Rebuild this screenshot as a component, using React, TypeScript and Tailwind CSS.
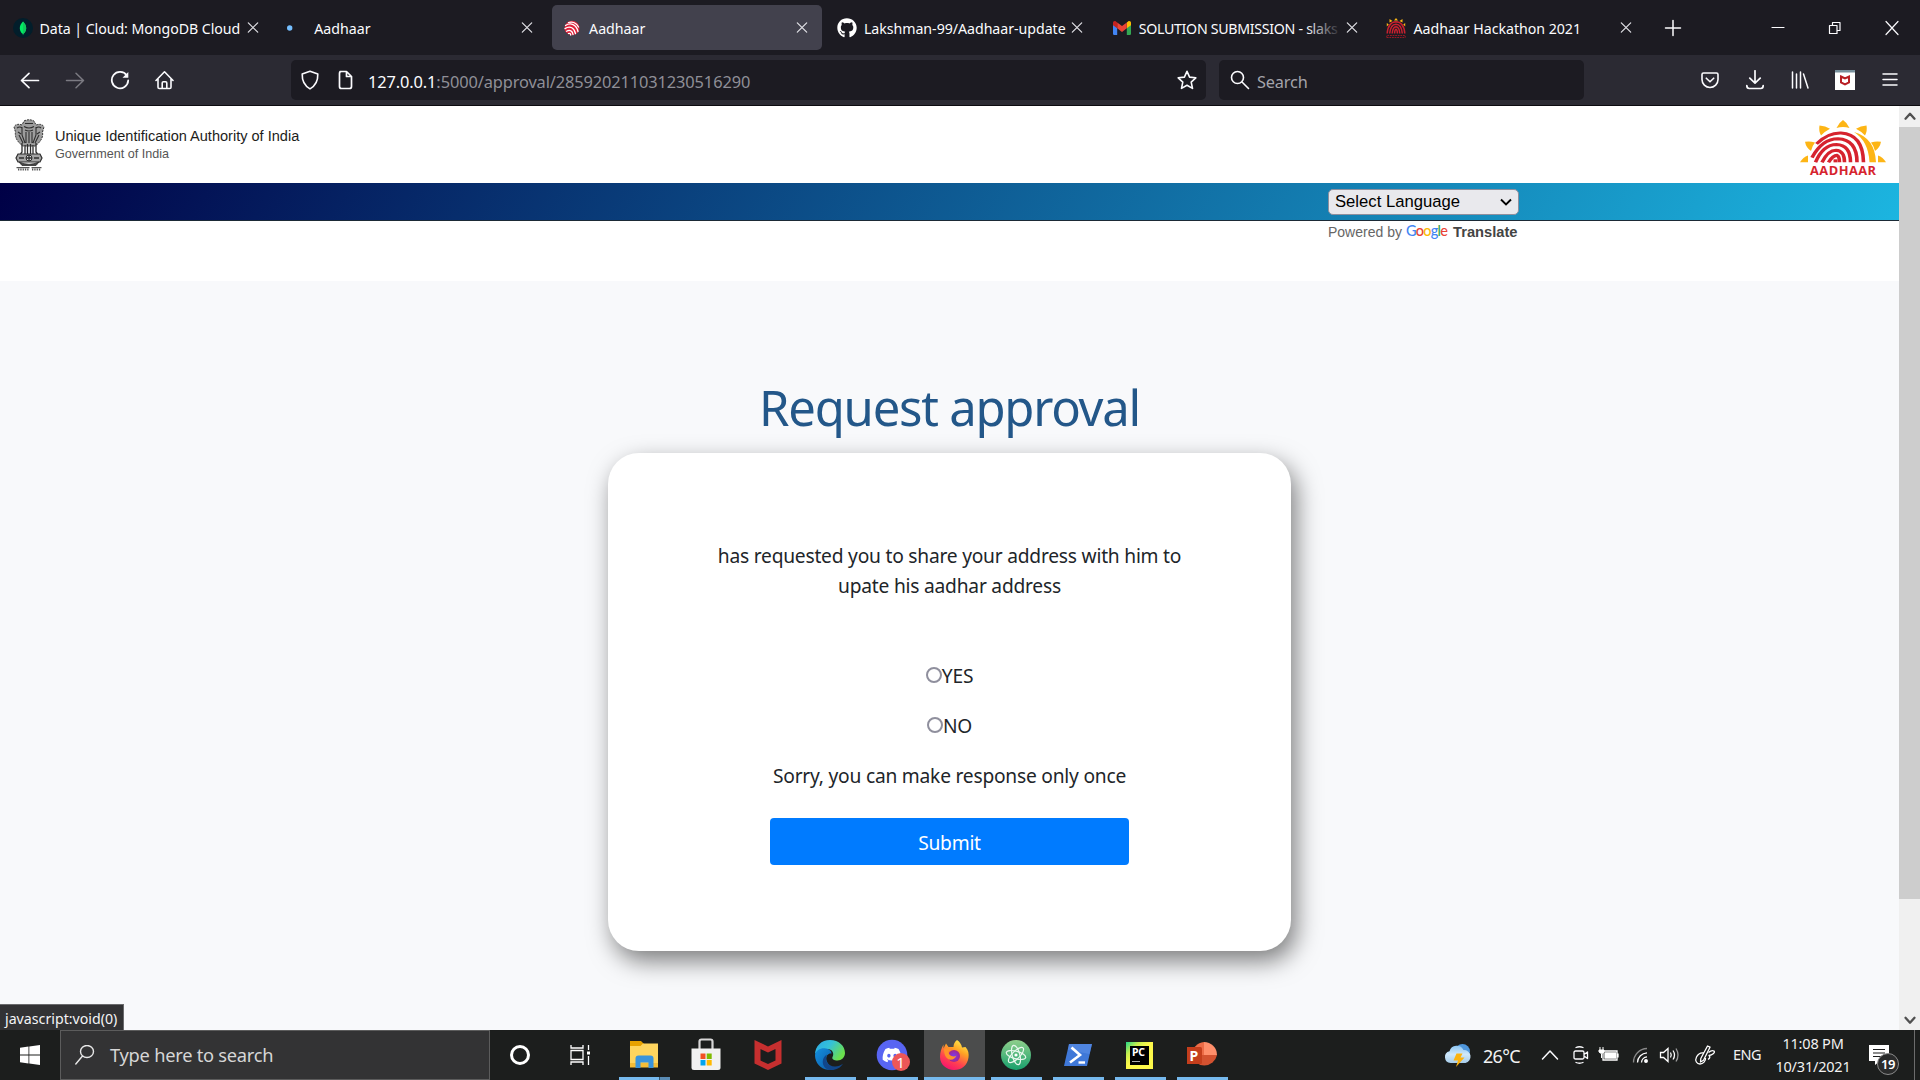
import React from "react";
import { FaGithub, FaDiscord } from "react-icons/fa";

type Kids = { children?: React.ReactNode };

const UI = "font-['Noto_Sans','Open_Sans',sans-serif]";
const ARIAL = "font-['Liberation_Sans',Arial,sans-serif]";

/* ---------- browser chrome icons ---------- */

function Line({ d, className = "h-5 w-5", sw = 1.6, color = "#fbfbfe" }: { d: string; className?: string; sw?: number; color?: string }) {
  return (
    <svg viewBox="0 0 20 20" className={className + " shrink-0"} fill="none" stroke={color} strokeWidth={sw} strokeLinecap="round" strokeLinejoin="round">
      <path d={d} />
    </svg>
  );
}

function MongoIcon() {
  return (
    <svg viewBox="0 0 20 20" className="h-5 w-5">
      <circle cx="10" cy="10" r="10" fill="#021e2b" />
      <path d="M10 3.500c2.200 2.300 3.200 4.300 3.200 6.700 0 2.600-1.300 4.500-2.900 5.600L10 17.500l-.3-1.700C8.100 14.700 6.800 12.800 6.800 10.200 6.800 7.800 7.800 5.800 10 3.500z" fill="#00ed64" />
      <path d="M10 3.500c2.200 2.300 3.200 4.300 3.200 6.700 0 2.600-1.300 4.500-2.900 5.600L10 17.500z" fill="#10c85c" />
    </svg>
  );
}

function DotIcon() {
  return (
    <svg viewBox="0 0 20 20" className="h-5 w-5">
      <circle cx="2.700" cy="10" r="2.700" fill="#75bfff" />
    </svg>
  );
}

function FingerIcon() {
  return (
    <svg viewBox="0 0 20 20" className="h-5 w-5" fill="none" strokeLinecap="round">
      <ellipse cx="10" cy="10" rx="7.600" ry="7.200" fill="#e0223a" />
      <g stroke="#fff" strokeWidth="1.300">
        <path d="M3.500 7.500c5-3.500 11-1 12.500 6" />
        <path d="M3 10.600c5-3.200 9.500-.7 10.500 5" />
        <path d="M4.500 13.300c3.500-2 6-.3 6.500 3.200" />
        <path d="M6.500 4.500c4-1.300 8 .5 10 4.500" />
        <path d="M6.500 15.500c1.300-.5 2 0 2.200 1.500" />
      </g>
    </svg>
  );
}

function GmailIcon() {
  return (
    <svg viewBox="0 0 20 20" className="h-5 w-5">
      <path d="M1 6.500l4.200 3.100V17H2.200A1.200 1.200 0 0 1 1 15.800z" fill="#4285f4" />
      <path d="M19 6.500l-4.200 3.100V17h3a1.200 1.200 0 0 0 1.200-1.200z" fill="#34a853" />
      <path d="M14.800 4.500L16.100 3.500C17.400 2.600 19 3.400 19 5v2.200l-4.200 3.100z" fill="#fbbc04" />
      <path d="M5.200 4.500L10 8.100l4.800-3.600v5.800L10 13.900l-4.800-3.600z" fill="#ea4335" />
      <path d="M1 5c0-1.600 1.600-2.400 2.900-1.500l1.300 1v5.800L1 7.200z" fill="#c5221f" />
    </svg>
  );
}

function HackIcon() {
  return (
    <svg viewBox="0 0 20 20" className="h-5 w-5" fill="none">
      <path d="M8 2.500l2-2.500 2 2.500zM3.500 4.500L3.500 1l3 2zM16.500 4.500L16.500 1l-3 2zM.8 8.500l0-3.500 2 1.500zM19.200 8.500l0-3.500-2 1.500z" fill="#fbb615" />
      <g stroke="#c8202f" strokeWidth="1.500">
        <path d="M1.200 15.500Q2 4 10 3.700Q18 4 18.800 15.500" />
        <path d="M3.700 15.500Q4.500 6.500 10 6.300Q15.500 6.500 16.300 15.500" />
        <path d="M6.200 15.500Q6.700 9 10 8.800Q13.300 9 13.800 15.500" />
        <path d="M8.600 15.500Q8.700 11.500 10 11.300Q11.300 11.500 11.400 15.500" />
      </g>
      <path d="M.8 19.500V17.500h18.400v2z" stroke="#a31a26" strokeWidth=".9" strokeDasharray="1.800 .8" />
    </svg>
  );
}

type TabProps = { icon: React.ReactNode; title: string; active?: boolean; track: string; fade?: boolean };

function Tab({ icon, title, active, track, fade }: TabProps) {
  return (
    <div className={"flex h-[45px] w-[270px] shrink-0 items-center rounded-[5px] pl-[10px] " + (active ? "bg-[#42414d]" : "")}>
      <div className="h-5 w-5 shrink-0">{icon}</div>
      <div className={"relative ml-[7px] w-[203px] pt-px " + (fade ? "overflow-hidden" : "")}>
        <span className={"whitespace-nowrap text-[14.200px] leading-5 text-[#fbfbfe] " + track}>{title}</span>
        {fade && <div className="absolute inset-y-0 right-0 w-9 bg-linear-to-r from-transparent to-[#1c1b22]" />}
      </div>
      <Line d="M5.300 4.800L14.700 14.200M14.700 4.800L5.300 14.200" sw={1.200} color="#e3e3e8" />
    </div>
  );
}

function TabBar() {
  return (
    <div className="flex h-[55px] items-center bg-[#1c1b22] pl-[2.500px]">
      <div className="flex gap-[4.800px]">
        <Tab icon={<MongoIcon />} title="Data | Cloud: MongoDB Cloud" track="tracking-[-0.060px]" />
        <Tab icon={<DotIcon />} title="Aadhaar" track="tracking-normal" />
        <Tab icon={<FingerIcon />} title="Aadhaar" active track="tracking-normal" />
        <Tab icon={<FaGithub className="h-5 w-5 text-white" />} title="Lakshman-99/Aadhaar-update" track="tracking-[-0.040px]" />
        <Tab icon={<GmailIcon />} title="SOLUTION SUBMISSION - slaks" track="tracking-[-0.300px]" fade />
        <Tab icon={<HackIcon />} title="Aadhaar Hackathon 2021" track="tracking-[-0.030px]" />
      </div>
      <div className="ml-[9px] flex w-[36px] justify-center">
        <Line d="M10 2.500v15M2.500 10h15" sw={1.500} />
      </div>
      <div className="ml-auto flex">
        {["M4 9.500h12", "M4.500 7.500h7.500v8H4.500zM7.500 7.500V4.500h7.500v8h-3", "M4 3.500l12 13M16 3.500L4 16.500"].map((d) => (
          <div key={d} className="flex w-[57px] justify-center">
            <Line d={d} sw={1.200} />
          </div>
        ))}
      </div>
    </div>
  );
}

function NavCell({ children, w = "w-[45px]" }: Kids & { w?: string }) {
  return <div className={"flex shrink-0 justify-center " + w}>{children}</div>;
}

function NavBar() {
  return (
    <div className="flex h-[51px] items-center border-b border-[#0c0b10] bg-[#2b2a33]">
      <div className="flex w-[291px] pl-[7px]">
        <NavCell><Line d="M1.500 10.500h17M9 3.300L1.500 10.500L9 17.700" sw={1.700} /></NavCell>
        <NavCell><Line d="M1.500 10.500h17M11 3.300L18.500 10.500L11 17.700" color="#7b7a82" sw={1.500} /></NavCell>
        <NavCell>
          <svg viewBox="0 0 20 20" className="h-5 w-5" fill="none" stroke="#fbfbfe" strokeWidth="1.800" strokeLinecap="round">
            <path d="M16.800 5.500A8.200 8.200 0 1 0 18.200 10.500" />
            <path d="M18.300 2v5.800h-5.800z" fill="#fbfbfe" stroke="none" />
          </svg>
        </NavCell>
        <NavCell><Line d="M1 10.500L9.500 1.800l8.500 8.700M3 9v8.200q0 1.300 1.300 1.300h10.400q1.300 0 1.300-1.300V9M7.200 18.300V13q0-1.200 1.200-1.200h2.200q1.200 0 1.200 1.200v5.300" sw={1.600} /></NavCell>
      </div>
      <div className="flex h-10 w-[915px] items-center rounded-[5px] bg-[#1c1b22] pl-[9px]">
        <Line d="M10 1.200l7.800 2.900c.2 6.500-1.600 11.400-7.800 14.800C3.800 15.500 2 10.600 2.200 4.100z" sw={1.600} />
        <Line d="M5 1.500h6.500l5 5V16.500q0 2-2 2h-8q-2 0-2-2V3.500q0-2 2-2M11.500 2v4.500h4.500" sw={1.700} className="ml-[15px] h-5 w-5" />
        <span className="ml-[13px] whitespace-nowrap pt-[4px] text-[16.400px] leading-6 tracking-[-0.120px] text-[#8f8f97]">
          <span className="text-[#fbfbfe]">127.0.0.1</span>:5000/approval/285920211031230516290
        </span>
        <Line d="M10 1.300l2.600 5.800 6.200.7-4.600 4.300 1.300 6.300L10 15.200l-5.500 3.200 1.300-6.300L1.200 7.800l6.200-.7z" className="mr-[9px] ml-auto h-5 w-5" />
      </div>
      <div className="ml-[13px] flex h-10 w-[365px] items-center rounded-[5px] bg-[#1c1b22] pl-[11px]">
        <Line d="M13.500 7.500a6 6 0 1 1-12 0a6 6 0 1 1 12 0M12 12l6.500 6.500" />
        <span className="ml-[7px] pt-[4px] text-[16.300px] leading-6 tracking-[-0.150px] text-[#a4a4ab]">Search</span>
      </div>
      <div className="ml-auto flex pr-[8px]">
        <NavCell><Line d="M3.500 3h13q1.500 0 1.500 1.500V9.500a8 8 0 0 1-16 0V4.500Q2 3 3.500 3zM6.300 8.200L10 11.800l3.700-3.600" /></NavCell>
        <NavCell><Line d="M10 .8V13M4.800 8.200L10 13.200l5.200-5M1.800 15.500q0 3 2.500 3h11.400q2.500 0 2.500-3" sw={1.700} /></NavCell>
        <NavCell><Line d="M2.500 2v16M6.500 4v14M10.500 2v16M13.500 4l4.500 14" sw={1.500} /></NavCell>
        <NavCell>
          <svg viewBox="0 0 20 20" className="h-5 w-5">
            <path d="M0 0h20v20H0z" fill="#fff" />
            <path d="M0 0h20v2.500H0z" fill="#78909c" />
            <path d="M6 6.500L10 8.500l4-2v6L10 14.500l-4-2z" fill="none" stroke="#b81f24" strokeWidth="2" />
          </svg>
        </NavCell>
        <NavCell><Line d="M3 4h14M3 9.500h14M3 15h14" sw={1.500} /></NavCell>
      </div>
    </div>
  );
}

/* ---------- page ---------- */

function Emblem() {
  return (
    <svg viewBox="0 0 32 52" className="h-[52px] w-8" fill="none" stroke="#2e2e2e">
      <path d="M11 2q5-2.500 10 0l2 4q6-2 8 2l-1.500 5q1 6-4 11l-3 3H9.500l-3-3q-5-5-4-11L1 8q2-4 8-2z" fill="#9d9d9d" strokeWidth="1" strokeDasharray="2 1" />
      <path d="M12 4.500h8M11 7.500q5 3 10 0M12 11q4 2 8 0M4 9q3-2 5 0M23 9q3-2 5 0M5 13l3 2M27 13l-3 2M9 8v8l3 8M23 8v8l-3 8M13 13v11M16 13v11M19 13v11M6 16l4 8M26 16l-4 8" strokeWidth="1.100" />
      <path d="M9 24v9l-1.500 2M12 26v9M14.500 25v10M17.500 25v10M20 26v9M23 24v9l1.500 2" strokeWidth="1.300" />
      <path d="M5 35h22l2 4-2 4H5L3 39z" fill="#a5a5a5" strokeWidth="1.200" />
      <circle cx="16" cy="39" r="3" strokeWidth="1" fill="#ddd" />
      <path d="M6 39h5M21 39h5M13 39h6M16 36v6" strokeWidth="1.300" />
      <path d="M6 43q10 4.500 20 0l-3 3.500H9z" fill="#444" strokeWidth=".8" />
      <path d="M3.500 48.700h13M18.500 48.700h10" strokeWidth="1" />
      <path d="M5 50.500h11M19 50.500h9" strokeWidth="1.800" strokeDasharray="1.300 1" stroke="#555" />
    </svg>
  );
}

function AadhaarLogo() {
  return (
    <svg viewBox="0 0 90 50" className="h-[50px] w-[90px]" fill="none">
      <g transform="translate(0 2.400) scale(1 0.840)">
        <g fill="#fdb515">
          <path d="M43 3q4.500 3.500 6.500 9.500q-6.500-2-13 0q2-6 6.500-9.500z" />
          <path d="M19.500 9.500q6 .5 10.500 4q-5 3-9 8q-2.500-5.500-1.500-12z" />
          <path d="M66.500 9.500q-6 .5-10.500 4q5 3 9 8q2.500-5.500 1.500-12z" />
          <path d="M5 29q5-1 10 .8q-3 4.200-4 10.200q-5-4-6-11z" />
          <path d="M81 29q-5-1-10 .8q3 4.200 4 10.200q5-4 6-11z" />
          <path d="M0 53.500q3-6 8-8v8z" />
          <path d="M86 53.500q-3-6-8-8v8z" />
          <path d="M54 17.500q21 7 22 36h-6.500q-1-25-15.500-36z" />
        </g>
        <g stroke="#d6232e" strokeWidth="3.600">
          <path d="M16.500 31.500Q28 18 41 18.500Q63 20 63.500 53.500" />
          <path d="M12 48Q22 25.500 38 25.500Q57 26.500 57 53.500" />
          <path d="M15.500 53.500Q23 32.500 36.500 32.300Q50.500 33 50.500 53.500" />
          <path d="M22 53.500Q28 39 36 39Q44.500 39.500 44.500 53.500" />
          <path d="M28.500 53.500Q33 45 37 45.200Q39.500 46.500 39.500 53.500" />
          <path d="M33.500 51.700h4" />
        </g>
      </g>
    </svg>
  );
}

function PageHeader() {
  return (
    <div className="relative flex h-[77px] items-start justify-between bg-white">
      <div className="flex pt-[13px] pl-[13px]">
        <Emblem />
        <div className={"ml-[10px] flex flex-col pt-[7px] " + ARIAL}>
          <span className="text-[14.560px] leading-[20px] whitespace-nowrap text-[#1d1d1b]">Unique Identification Authority of India</span>
          <span className="text-[12.600px] leading-[16px] whitespace-nowrap text-[#555]">Government of India</span>
        </div>
      </div>
      <div className="flex w-[99px] flex-col pt-[9px]">
        <AadhaarLogo />
        <span className="-mt-[2px] ml-[10px] text-[12.800px] leading-[14px] font-bold tracking-[0.500px] text-[#d6232e] font-['Open_Sans',sans-serif]">AADHAAR</span>
      </div>
    </div>
  );
}

function LanguageBar() {
  return (
    <div className={"h-[98px] bg-white " + ARIAL}>
      <div className="flex h-[38px] border-b border-[#1b2a36] bg-[linear-gradient(120deg,#000046,#1cb5e0)] pt-[6px] pl-[1328px]">
        <div className="flex h-[26px] w-[191px] items-center justify-between rounded-[5px] border border-[#8f8f9d] bg-[#e9e9ed] pr-[5px] pl-[6px]">
          <span className="-mt-px text-[16.670px] leading-[23px] text-black">Select Language</span>
          <svg viewBox="0 0 14 14" className="h-[14px] w-[14px]" fill="none" stroke="#000" strokeWidth="1.900">
            <path d="M2 4.500l5 5 5-5" />
          </svg>
        </div>
      </div>
      <div className="flex pl-[1328px] whitespace-nowrap">
        <span className="w-[78px] text-[14px] leading-[22px] text-[#666]">Powered by</span>
        <span className="w-[47px] text-[14.500px] leading-[20px] font-medium tracking-[-0.750px] font-['Lato',sans-serif]">
          <span className="text-[#4285f4]">G</span>
          <span className="text-[#ea4335]">o</span>
          <span className="text-[#fbbc05]">o</span>
          <span className="text-[#4285f4]">g</span>
          <span className="text-[#34a853]">l</span>
          <span className="text-[#ea4335]">e</span>
        </span>
        <span className="text-[14.700px] leading-[22px] font-bold text-[#444]">Translate</span>
      </div>
    </div>
  );
}

function Choice({ label }: { label: string }) {
  return (
    <label className="mb-5 flex h-[30px] items-center justify-center">
      <span className="h-4 w-4 rounded-full border-2 border-[#8f8f9d] bg-white" />
      <span className="pt-px">{label}</span>
    </label>
  );
}

function ApprovalCard() {
  return (
    <div className="mx-auto h-[498px] w-[683px] rounded-[31px] bg-white pt-[87px] text-center text-[19.200px] leading-[30px] tracking-[-0.220px] text-[#212529] shadow-[5px_10px_25px_rgba(0,0,0,0.5)]">
      <p className="mb-[59px] pt-px">
        has requested you to share your address with him to
        <br />
        upate his aadhar address
      </p>
      <Choice label="YES" />
      <Choice label="NO" />
      <p className="pt-px">Sorry, you can make response only once</p>
      <button className="mt-[27px] h-[47px] w-[359px] rounded-[4px] bg-[#007bff] pt-[3px] text-white">Submit</button>
    </div>
  );
}

function ScrollBar() {
  return (
    <div className="flex w-[21px] flex-col bg-[#f0f0f0]">
      <div className="flex h-[21px] items-start justify-center pt-px">
        <Line d="M5 13l5-5.500 5 5.500" sw={2.600} color="#505050" className="h-[18px] w-[18px]" />
      </div>
      <div className="h-[772px] bg-[#cdcdcd]" />
      <div className="mt-auto flex h-[21px] items-center justify-center">
        <Line d="M5 7.500l5 5.500 5-5.500" sw={2.600} color="#505050" className="h-[18px] w-[18px]" />
      </div>
    </div>
  );
}

function Page() {
  return (
    <div className="relative flex h-[924px]">
      <div className="w-[1899px] overflow-hidden bg-[#f8f9fb]">
        <PageHeader />
        <LanguageBar />
        <h1 className="pt-[96px] text-center text-[49px] leading-[60px] tracking-[-1.250px] text-[#235789]">Request approval</h1>
        <div className="pt-[16px]">
          <ApprovalCard />
        </div>
      </div>
      <ScrollBar />
      <div className="absolute bottom-0 left-0 h-[26px] w-[124px] border-t border-r border-[#6a6a6c] bg-[#323234] pt-[3px] pl-[5px] text-[14.200px] leading-[22px] whitespace-nowrap text-[#f4f4f6]">
        javascript:void(0)
      </div>
    </div>
  );
}

/* ---------- taskbar ---------- */

function App36({ children }: Kids) {
  return (
    <svg viewBox="0 0 36 36" className="h-9 w-9" fill="none">
      {children}
    </svg>
  );
}

const explorer = (
  <App36>
    <path d="M4 4h11l3 3v6H4z" fill="#e8a200" />
    <path d="M4 9h10.500l2.500-2.500H32v22H4z" fill="#ffd55e" />
    <path d="M4 26h28v4.500H4z" fill="#f5bd37" />
    <path d="M9.500 31V21.500q0-3 3-3h12q3 0 3 3V31h-5v-5.500h-8V31z" fill="#3a94dc" />
  </App36>
);

const store = (
  <App36>
    <path d="M11.500 12V4.500q0-2 2-2h9q2 0 2 2v8" stroke="#d7d7d7" strokeWidth="2.200" />
    <path d="M3.500 11.500h29v19q0 2.500-2.500 2.500H6q-2.500 0-2.500-2.500z" fill="#f1f1f1" />
    <path d="M12.500 16.500h5v5.500h-5z" fill="#f25022" />
    <path d="M18.700 16.500h5v5.500h-5z" fill="#7fba00" />
    <path d="M12.500 23h5v5.500h-5z" fill="#00a4ef" />
    <path d="M18.700 23h5v5.500h-5z" fill="#ffb900" />
  </App36>
);

const mcafee = (
  <App36>
    <path d="M4.500 3L18 9.500 31.500 3v23.500L18 33 4.500 26.500z" fill="#c62f2f" />
    <path d="M10.500 12L18 15.500l7.500-3.500v11.500L18 27 10.500 23.500z" fill="#1c1d1d" />
  </App36>
);

const edge = (
  <App36>
    <defs>
      <linearGradient id="edgeTop" x1="0" y1="0" x2="1" y2=".5">
        <stop offset="0" stopColor="#2aa9e8" />
        <stop offset=".5" stopColor="#35c1d8" />
        <stop offset="1" stopColor="#6be04d" />
      </linearGradient>
      <linearGradient id="edgeLow" x1="0" y1="0" x2="1" y2="1">
        <stop offset="0" stopColor="#1490df" />
        <stop offset="1" stopColor="#0c59a4" />
      </linearGradient>
    </defs>
    <path d="M3 18C3 9 9.500 3 18 3c9 0 15 6 15 13 0 4.500-3.500 7.500-7.500 7.500-3.500 0-6-1.500-5-3.500 2-3.500 0-8-5.500-8C9 12 4 14 3 18z" fill="url(#edgeTop)" />
    <path d="M3 18c1-5 6-7.500 11-6.500 4 .8 5.500 3 5.500 5-6-1-8.500 9 2 14.500-2.500 1.500-4.500 2-6 1.800C8.500 32 3 26 3 18z" fill="url(#edgeLow)" />
    <path d="M15 17.500c-3 5 .5 12 8 12 3 0 6-1.300 8-2.700C28.500 31 23.500 33.500 18.500 33c-9-1-10-12-3.500-15.500z" fill="#11468a" />
  </App36>
);

const discord = (
  <div className="relative h-9 w-9">
    <div className="flex h-9 w-9 scale-[0.850] items-center justify-center rounded-full bg-[#5865f2]">
      <FaDiscord className="h-6 w-6 text-white" />
    </div>
    <span className="absolute right-0 bottom-0.5 flex h-[18px] w-[18px] items-center justify-center rounded-full bg-[#ed5757] text-[15px] leading-none text-white">1</span>
  </div>
);

const firefox = (
  <App36>
    <defs>
      <linearGradient id="ffBody" x1=".8" y1="0" x2=".3" y2="1">
        <stop offset="0" stopColor="#fff44f" />
        <stop offset=".35" stopColor="#ffa324" />
        <stop offset=".7" stopColor="#ff4150" />
        <stop offset="1" stopColor="#f5126f" />
      </linearGradient>
      <radialGradient id="ffCore">
        <stop offset="0" stopColor="#7a3cf0" />
        <stop offset="1" stopColor="#a3278f" />
      </radialGradient>
    </defs>
    <path d="M21 3c3 2 4.500 4.500 5 7.500l3.500-.5c3 3.500 3.500 6.500 3 10.500C31.500 28.500 25.500 33 18 33S4 27.500 4 20c0-5 1.500-9 3.500-12.500v4l2.500-5 2.500 3.500H17.500c0-3 1-5 3.500-7z" fill="url(#ffBody)" />
    <circle cx="18" cy="19" r="6" fill="url(#ffCore)" />
    <path d="M8 12q4-2.500 9-1-1 2.500-4.500 3.500 0 3 3 4.500 3 1 5-.5-2 5-7.500 4-5-2-5-10.500z" fill="#ff9328" />
  </App36>
);

const atom = (
  <App36>
    <defs>
      <linearGradient id="atomBg" x1="0" y1="0" x2="0" y2="1">
        <stop offset="0" stopColor="#8fcf8c" />
        <stop offset="1" stopColor="#17a06c" />
      </linearGradient>
    </defs>
    <circle cx="18" cy="18" r="15" fill="url(#atomBg)" />
    <g stroke="#e9f7ee" strokeWidth="1.200">
      <ellipse cx="18" cy="18" rx="10" ry="3.800" transform="rotate(15 18 18)" />
      <ellipse cx="18" cy="18" rx="10" ry="3.800" transform="rotate(75 18 18)" />
      <ellipse cx="18" cy="18" rx="10" ry="3.800" transform="rotate(-45 18 18)" />
    </g>
    <circle cx="18" cy="18" r="1.600" fill="#fff" />
  </App36>
);

const powershell = (
  <App36>
    <path d="M9 7h23l-5 22H4z" fill="#3f78d8" />
    <path d="M9 7h23l-2.500 10L8 13z" fill="#5a8de6" opacity=".6" />
    <path d="M11.500 10.500l8.500 7.500-10 7.500" stroke="#fff" strokeWidth="2.600" />
    <path d="M18.500 25.500h6.500" stroke="#fff" strokeWidth="2.400" />
  </App36>
);

const pycharm = (
  <div className="flex h-[27px] w-[27px] items-center justify-center bg-[linear-gradient(135deg,#21d789_0%,#c8ef4e_25%,#fcf84a_45%)]">
    <div className="flex h-[19px] w-[19px] flex-col bg-black pt-px pl-[2px]">
      <span className="text-[10.500px] leading-[11px] font-bold tracking-[-0.300px] text-white">PC</span>
      <span className="mt-[3px] h-[1.500px] w-[8px] bg-[#aaa]" />
    </div>
  </div>
);

const powerpoint = (
  <div className="relative h-9 w-9">
    <App36>
      <path d="M20 18V5a13 13 0 0 0-12 13z" fill="#ed6c47" />
      <path d="M20 5a13 13 0 0 1 13 13H20z" fill="#ff8f6b" />
      <path d="M7.500 18H33a13 13 0 0 1-25.500 0z" fill="#d35230" />
      <path d="M3 10h13.500q1.500 0 1.500 1.500v14q0 1.500-1.500 1.500H3z" fill="#c43e1c" />
    </App36>
    <span className="absolute top-[9px] left-[6px] text-[14px] leading-[19px] font-bold text-white">P</span>
  </div>
);

function TaskIcon({ children, open, active, stacked }: Kids & { open?: boolean; active?: boolean; stacked?: boolean }) {
  return (
    <div className={"flex h-[50px] w-[61px] flex-col items-center " + (active ? "bg-[#4b4c4c]" : "")}>
      <div className="flex h-[47px] items-center pt-[3px] pr-[2px]">{children}</div>
      {open && (
        <div className={"flex h-[3px] bg-[#76b9ed] " + (active ? "w-full" : "w-[51px]")}>
          {stacked && <div className="ml-auto h-full w-[11px] border-l border-[#35566e] bg-[#5a8cb4]" />}
        </div>
      )}
    </div>
  );
}

function Tray() {
  return (
    <div className="ml-auto flex h-full items-center text-[#f2f2f2]">
      <svg viewBox="0 0 30 26" className="h-[26px] w-[30px]">
        <defs>
          <linearGradient id="cloud" x1="0" y1="0" x2="0" y2="1">
            <stop offset="0" stopColor="#8cc6f2" />
            <stop offset=".5" stopColor="#cfe8fb" />
            <stop offset="1" stopColor="#a7cdea" />
          </linearGradient>
        </defs>
        <circle cx="19.500" cy="9.500" r="7.500" fill="#4f97dc" />
        <path d="M7.500 21a6 6 0 0 1-1-11.800A7.500 7.500 0 0 1 20.500 8a6.600 6.600 0 0 1 2 13z" fill="url(#cloud)" />
        <path d="M13.500 11.500h6l-2 4h4L13 25l2-6.500h-4.500z" fill="#fbb310" />
      </svg>
      <span className="ml-[10px] w-[38px] pt-px text-[18px] leading-6 tracking-[-0.700px] whitespace-nowrap">26°C</span>
      <Line d="M2.500 14L10 6l7.500 8" sw={1.500} className="ml-[19px] h-5 w-5" />
      <Line d="M3.500 6h7q1.500 0 1.500 1.500v5q0 1.500-1.500 1.500h-7Q2 14 2 12.500v-5Q2 6 3.500 6zM12 9.500l3.500-2.500v6.500L12 11M4 2.500q3.500-1.500 7 0M4 17.500q3.500 1.500 7 0" sw={1.300} className="ml-[12px] h-5 w-5" />
      <svg viewBox="0 0 22 20" className="ml-[6px] h-5 w-[22px]" fill="none" stroke="#fff" strokeWidth="1.300">
        <path d="M5 6h14v9H5zM20 8.500v4" />
        <path d="M7 8h10.500v5H7z" fill="#fff" />
        <path d="M2 2v3M5 2v3M1 5h5v2q-2.500 3-5 0zM3.500 9v4" fill="#fff" strokeWidth="1" />
      </svg>
      <svg viewBox="0 0 20 20" className="ml-[11px] h-5 w-5" fill="none" stroke="#fff" strokeWidth="1.300">
        <circle cx="15" cy="16" r="1.300" fill="#fff" />
        <path d="M10.500 17.500A6 6 0 0 1 16 11.800" />
        <path d="M6.500 17.500A10 10 0 0 1 16 7.800" />
        <path d="M2.500 17.500A14 14 0 0 1 16 3.500" stroke="#888" />
      </svg>
      <svg viewBox="0 0 22 20" className="ml-[8px] h-5 w-[22px]" fill="none" stroke="#fff" strokeWidth="1.300">
        <path d="M1.500 7.500h3L9 3.500v13l-4.500-4h-3z" />
        <path d="M11.500 7.500q1.500 2.500 0 5M14 5.500q3 4.500 0 9" />
        <path d="M17 3.500q4 6.500 0 13" stroke="#999" />
      </svg>
      <svg viewBox="0 0 22 22" className="ml-[13px] h-[22px] w-[22px]" fill="none" stroke="#fff" strokeWidth="1.300" strokeLinejoin="round">
        <path d="M13.500 2l2.500 1.200-6.500 13L6.500 18l.3-3.500z" />
        <path d="M10 9q-5-1-7.500 4c-2 4 .5 7 3.500 7s6-3 5.500-6M14.500 8.500q3-2.500 5.500-1.500c1.500 2-2 4-5 4.500q2 2-1 4" />
      </svg>
      <span className="ml-[17px] w-[31px] text-[14.500px] tracking-[-0.500px]">ENG</span>
      <div className="ml-[10px] flex w-[78px] flex-col items-center text-[14.500px] leading-[23px] tracking-[-0.200px] whitespace-nowrap">
        <span>11:08 PM</span>
        <span>10/31/2021</span>
      </div>
      <div className="relative ml-[17px] h-5 w-5">
        <svg viewBox="0 0 20 20" className="h-5 w-5">
          <path d="M0 0h20v16h-9l-5 4v-4H0z" fill="#fff" />
          <path d="M4 4.500h12M4 8h12M4 11.500h8" stroke="#1c1d1d" strokeWidth="1.200" />
        </svg>
        <span className="absolute top-[8px] left-[8px] flex h-[22px] w-[22px] items-center justify-center rounded-full border border-[#8a8a8a] bg-[#2a2b2b] text-[13px] leading-none font-semibold tracking-[-0.500px] text-white">19</span>
      </div>
      <div className="ml-[25px] h-full w-px bg-[#6c6c6c]" />
      <div className="w-[5px]" />
    </div>
  );
}

function Taskbar() {
  return (
    <div className="flex h-[50px] bg-[#1c1e1d]">
      <div className="flex w-[60px] items-center justify-center">
        <svg viewBox="0 0 20 20" className="h-5 w-5" fill="#fff">
          <path d="M0 2.800L8.500 1.600v8H0zM9.300 1.500L20 0v9.600H9.300zM0 10.400h8.500v8L0 17.200zM9.300 10.400H20V20L9.300 18.500z" />
        </svg>
      </div>
      <div className="flex w-[430px] items-center border border-[#5c5c5c] bg-[#333334] pl-[14px]">
        <Line d="M18.500 6.500a6.500 6 0 1 1-13 0a6.500 6 0 1 1 13 0M7.500 11L.8 19" sw={1.400} color="#e8e8e8" />
        <span className="ml-[15px] pb-px text-[18.300px] tracking-[-0.260px] whitespace-nowrap text-[#d6d6d6]">Type here to search</span>
      </div>
      <div className="flex w-[60px] items-center justify-center">
        <span className="h-[20px] w-[20px] rounded-full border-[3px] border-white" />
      </div>
      <div className="flex w-[60px] items-center justify-center">
        <svg viewBox="0 0 20 20" className="h-5 w-5" fill="none" stroke="#fff" strokeWidth="1.300">
          <path d="M1 5.500h12v9H1zM1 0v3h12V0M1 20v-3h12v3M18.500 0v5M18.500 11v9" />
          <path d="M17 6.500h3v3h-3z" fill="#fff" stroke="none" />
        </svg>
      </div>
      <div className="ml-[4px] flex gap-px">
        <TaskIcon open stacked>{explorer}</TaskIcon>
        <TaskIcon>{store}</TaskIcon>
        <TaskIcon>{mcafee}</TaskIcon>
        <TaskIcon open>{edge}</TaskIcon>
        <TaskIcon open>{discord}</TaskIcon>
        <TaskIcon open active>{firefox}</TaskIcon>
        <TaskIcon open>{atom}</TaskIcon>
        <TaskIcon open>{powershell}</TaskIcon>
        <TaskIcon open>{pycharm}</TaskIcon>
        <TaskIcon open>{powerpoint}</TaskIcon>
      </div>
      <Tray />
    </div>
  );
}

export default function App() {
  return (
    <div className={"flex h-[1080px] w-[1920px] flex-col overflow-hidden " + UI}>
      <TabBar />
      <NavBar />
      <Page />
      <Taskbar />
    </div>
  );
}
